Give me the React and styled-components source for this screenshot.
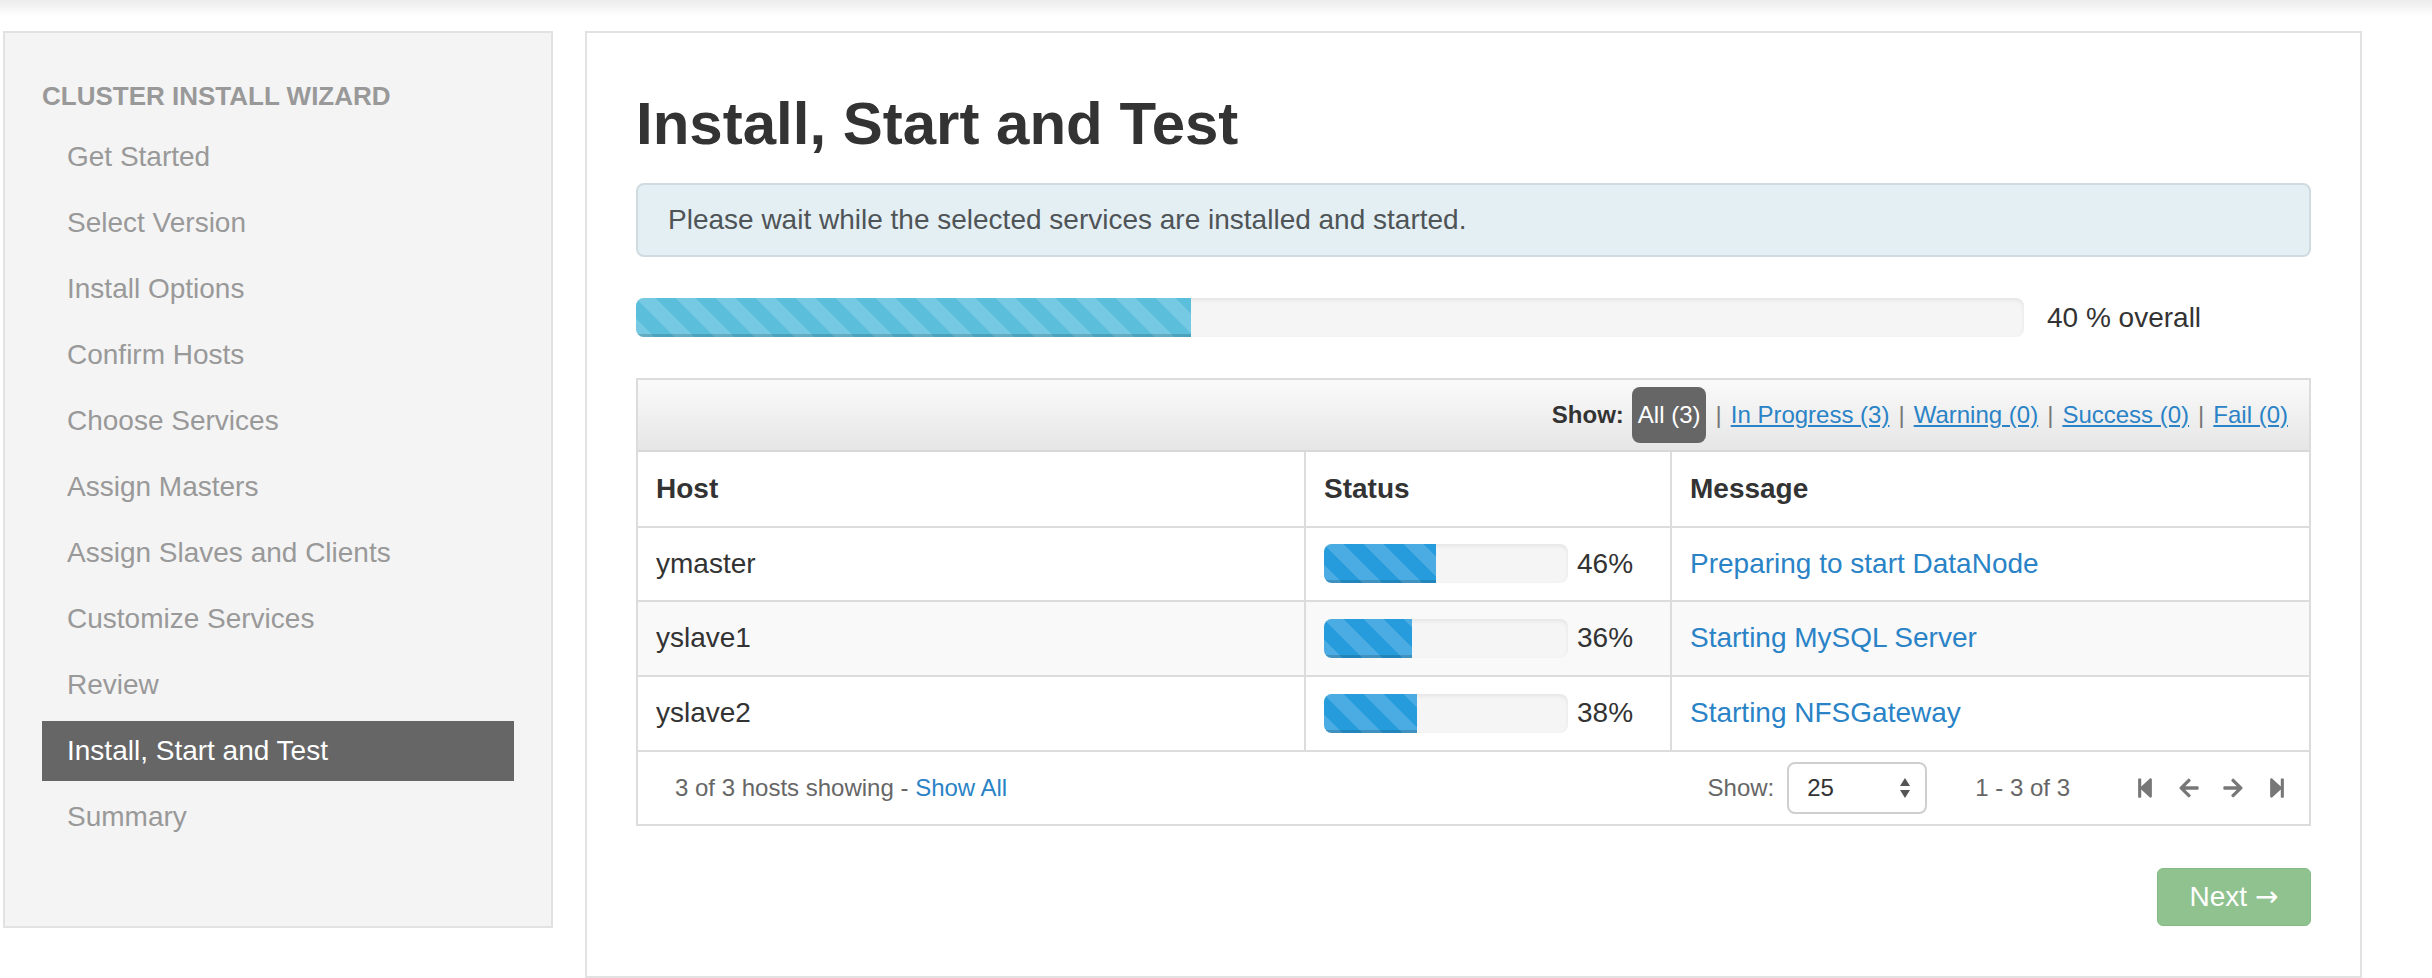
import React from 'react';
import styled, { createGlobalStyle } from 'styled-components';
import { FaStepBackward, FaStepForward, FaArrowLeft, FaArrowRight } from 'react-icons/fa';

const GlobalStyle = createGlobalStyle`
  html, body {
    margin: 0;
    padding: 0;
    background: #fff;
  }
  body {
    font-family: "Liberation Sans", Arial, sans-serif;
    color: #333;
  }
  * {
    box-sizing: border-box;
  }
`;

const TopShade = styled.div`
  height: 16px;
  background: linear-gradient(to bottom, #ececec, #ffffff);
`;

const Page = styled.div`
  display: flex;
  align-items: flex-start;
  gap: 32px;
  padding: 15px 0 0 3px;
`;

const Sidebar = styled.aside`
  width: 550px;
  background: #f4f4f4;
  border: 2px solid #e2e2e2;
  padding: 43px 37px 79px;
`;

const NavHeader = styled.div`
  font-size: 26px;
  font-weight: bold;
  line-height: 40px;
  color: #999;
  text-transform: uppercase;
  margin-bottom: 11px;
`;

const NavList = styled.ul`
  list-style: none;
  margin: 0;
  padding: 0;
  display: flex;
  flex-direction: column;
  gap: 6px;
`;

const NavItem = styled.li`
  height: 60px;
  line-height: 60px;
  padding-left: 25px;
  font-size: 28px;
  color: ${(p) => (p.$active ? '#fff' : '#999')};
  background: ${(p) => (p.$active ? '#666' : 'transparent')};
`;

const Main = styled.main`
  width: 1777px;
  background: #fff;
  border: 2px solid #e2e2e2;
  padding: 55px 49px 50px;
`;

const Title = styled.h2`
  margin: 0;
  font-size: 60px;
  line-height: 72px;
  font-weight: bold;
  color: #333;
`;

const Alert = styled.div`
  margin-top: 23px;
  background: #e4eff4;
  border: 2px solid #cfdbe0;
  border-radius: 8px;
  padding: 16px 30px;
  font-size: 28px;
  line-height: 38px;
  color: #4f5457;
`;

const OverallRow = styled.div`
  display: flex;
  align-items: center;
  gap: 23px;
  margin-top: 41px;
`;

const OverallLabel = styled.span`
  font-size: 28px;
  color: #333;
`;

const Track = styled.div`
  width: ${(p) => p.$width}px;
  height: 39px;
  border-radius: 8px;
  background: #f5f5f5;
  box-shadow: inset 0 2px 4px rgba(0, 0, 0, 0.07);
  overflow: hidden;
  flex-shrink: 0;
`;

const Fill = styled.div`
  height: 100%;
  background-color: ${(p) => p.$color};
  background-image: linear-gradient(
    45deg,
    rgba(255, 255, 255, 0.16) 25%,
    transparent 25%,
    transparent 50%,
    rgba(255, 255, 255, 0.16) 50%,
    rgba(255, 255, 255, 0.16) 75%,
    transparent 75%,
    transparent
  );
  background-size: 40px 40px;
  box-shadow: inset 0 -3px 0 rgba(0, 0, 0, 0.15);
`;

const TableBox = styled.div`
  margin-top: 41px;
  border: 2px solid #dcdcdc;
`;

const FilterBar = styled.div`
  height: 72px;
  display: flex;
  justify-content: flex-end;
  align-items: center;
  padding-right: 21px;
  background: linear-gradient(to bottom, #fafafa, #e6e6e6);
  border-bottom: 2px solid #d8d8d8;
  font-size: 24px;
`;

const FilterLabel = styled.span`
  font-weight: bold;
  color: #333;
  margin-right: 8px;
`;

const FilterPill = styled.span`
  background: #666;
  color: #fff;
  border-radius: 8px;
  height: 56px;
  line-height: 56px;
  padding: 0 6px;
`;

const FilterLink = styled.a`
  color: #2a83c6;
  text-decoration: underline;
  cursor: pointer;
`;

const Separator = styled.span`
  color: #777;
  margin: 0 9px;
`;

const Table = styled.table`
  width: 100%;
  border-collapse: collapse;
  border-style: hidden;
  font-size: 28px;
`;

const HeadCell = styled.th`
  text-align: left;
  font-weight: bold;
  color: #333;
  height: 74.5px;
  padding: 0 18px;
  border: 2px solid #dcdcdc;
  width: ${(p) => (p.$width ? `${p.$width}px` : 'auto')};
`;

const Row = styled.tr`
  background: ${(p) => (p.$striped ? '#f9f9f9' : '#fff')};
`;

const Cell = styled.td`
  height: 74.5px;
  padding: 0 18px;
  border: 2px solid #dcdcdc;
  color: #333;
`;

const StatusBox = styled.div`
  display: flex;
  align-items: center;
  gap: 9px;
`;

const MessageLink = styled.a`
  color: #2a83c6;
  text-decoration: none;
  cursor: pointer;
`;

const TableFooter = styled.div`
  height: 74px;
  display: flex;
  align-items: center;
  justify-content: space-between;
  padding: 0 21px 0 37px;
  border-top: 2px solid #dcdcdc;
  font-size: 24px;
  color: #666;
`;

const FooterRight = styled.div`
  display: flex;
  align-items: center;
`;

const SelectBox = styled.div`
  width: 140px;
  height: 52px;
  margin-left: 13px;
  border: 2px solid #cfcfcf;
  border-radius: 8px;
  display: flex;
  align-items: center;
  justify-content: space-between;
  padding: 0 14px 0 18px;
  color: #333;
  background: #fff;
`;

const RangeText = styled.span`
  margin-left: 48px;
`;

const Pager = styled.div`
  display: flex;
  align-items: center;
  gap: 22px;
  margin-left: 64px;
  color: #777;
  font-size: 22px;
`;

const NextRow = styled.div`
  display: flex;
  justify-content: flex-end;
  margin-top: 42px;
`;

const NextButton = styled.button`
  width: 154px;
  height: 58px;
  border: 1px solid #85bb85;
  border-radius: 6px;
  background: #8fc28f;
  color: #fff;
  font-family: inherit;
  font-size: 28px;
  display: flex;
  align-items: center;
  justify-content: center;
  gap: 8px;
`;

const Arrow = styled.span`
  font-family: "DejaVu Sans", sans-serif;
  font-size: 28px;
  line-height: 1;
`;

const steps = [
  'Get Started',
  'Select Version',
  'Install Options',
  'Confirm Hosts',
  'Choose Services',
  'Assign Masters',
  'Assign Slaves and Clients',
  'Customize Services',
  'Review',
  'Install, Start and Test',
  'Summary',
];

const hosts = [
  { name: 'ymaster', progress: 46, message: 'Preparing to start DataNode' },
  { name: 'yslave1', progress: 36, message: 'Starting MySQL Server' },
  { name: 'yslave2', progress: 38, message: 'Starting NFSGateway' },
];

const filters = ['In Progress (3)', 'Warning (0)', 'Success (0)', 'Fail (0)'];

const SortArrows = () => (
  <svg width="12" height="22" viewBox="0 0 12 22">
    <path d="M6 1 L11 9 L1 9 Z" fill="#555" />
    <path d="M6 21 L11 13 L1 13 Z" fill="#555" />
  </svg>
);

const ProgressBar = ({ width, value, color }) => (
  <Track $width={width}>
    <Fill $color={color} style={{ width: `${value}%` }} />
  </Track>
);

export default function App() {
  return (
    <>
      <GlobalStyle />
      <TopShade />
      <Page>
        <Sidebar>
          <NavHeader>Cluster Install Wizard</NavHeader>
          <NavList>
            {steps.map((s) => (
              <NavItem key={s} $active={s === 'Install, Start and Test'}>
                {s}
              </NavItem>
            ))}
          </NavList>
        </Sidebar>

        <Main>
          <Title>Install, Start and Test</Title>
          <Alert>Please wait while the selected services are installed and started.</Alert>

          <OverallRow>
            <ProgressBar width={1388} value={40} color="#5bbfdc" />
            <OverallLabel>40 % overall</OverallLabel>
          </OverallRow>

          <TableBox>
            <FilterBar>
              <FilterLabel>Show:</FilterLabel>
              <FilterPill>All (3)</FilterPill>
              {filters.map((f) => (
                <React.Fragment key={f}>
                  <Separator>|</Separator>
                  <FilterLink>{f}</FilterLink>
                </React.Fragment>
              ))}
            </FilterBar>

            <Table>
              <thead>
                <tr>
                  <HeadCell $width={667}>Host</HeadCell>
                  <HeadCell $width={366}>Status</HeadCell>
                  <HeadCell>Message</HeadCell>
                </tr>
              </thead>
              <tbody>
                {hosts.map((h, i) => (
                  <Row key={h.name} $striped={i === 1}>
                    <Cell>{h.name}</Cell>
                    <Cell>
                      <StatusBox>
                        <ProgressBar width={244} value={h.progress} color="#279cdc" />
                        <span>{h.progress}%</span>
                      </StatusBox>
                    </Cell>
                    <Cell>
                      <MessageLink>{h.message}</MessageLink>
                    </Cell>
                  </Row>
                ))}
              </tbody>
            </Table>

            <TableFooter>
              <span>
                3 of 3 hosts showing - <MessageLink>Show All</MessageLink>
              </span>
              <FooterRight>
                <span>Show:</span>
                <SelectBox>
                  <span>25</span>
                  <SortArrows />
                </SelectBox>
                <RangeText>1 - 3 of 3</RangeText>
                <Pager>
                  <FaStepBackward />
                  <FaArrowLeft />
                  <FaArrowRight />
                  <FaStepForward />
                </Pager>
              </FooterRight>
            </TableFooter>
          </TableBox>

          <NextRow>
            <NextButton>
              <span>Next</span>
              <Arrow>&rarr;</Arrow>
            </NextButton>
          </NextRow>
        </Main>
      </Page>
    </>
  );
}
